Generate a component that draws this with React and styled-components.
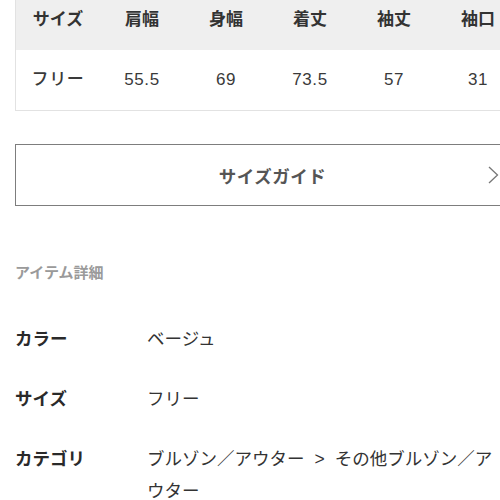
import React from "react";
import styled, { createGlobalStyle } from "styled-components";

const Global = createGlobalStyle`
  html, body { margin: 0; padding: 0; background: #fff; overflow: hidden; }
  body { font-family: "Liberation Sans", "Noto Sans CJK JP", sans-serif; color: #333; }
`;

const Page = styled.div`
  width: 530px;
  padding-left: 15px;
  box-sizing: border-box;
`;

const Table = styled.div`
  display: grid;
  grid-template-columns: repeat(7, 84px);
  border-left: 1px solid #e2e2e2;
  border-bottom: 1px solid #e2e2e2;
`;

const Cell = styled.div`
  display: flex;
  justify-content: center;
  align-items: ${(p) => (p.$head ? "flex-start" : "center")};
  box-sizing: border-box;
  height: ${(p) => (p.$head ? "50px" : "60px")};
  padding-top: ${(p) => (p.$head ? "8px" : "0")};
  background: ${(p) => (p.$head ? "#efefef" : "#fff")};
  font-size: 17px;
  line-height: 24px;
  font-weight: ${(p) => (p.$head ? 700 : 500)};
  letter-spacing: ${(p) => (p.$head ? "0" : "0.6px")};
  color: ${(p) => (p.$head ? "#333" : "#3a3a3a")};
  white-space: nowrap;
`;

const GuideButton = styled.div`
  margin-top: 33px;
  height: 62px;
  box-sizing: border-box;
  border: 1px solid #7d7d7d;
  display: flex;
  align-items: center;
  justify-content: center;
  position: relative;
  font-size: 17.5px;
  font-weight: 700;
  color: #555;
  letter-spacing: 0.5px;
`;

const Chevron = styled.svg`
  position: absolute;
  right: 30px;
  top: 50%;
  transform: translateY(-50%);
`;

const SectionTitle = styled.div`
  margin-top: 56px;
  font-size: 15px;
  line-height: 22px;
  font-weight: 700;
  color: #9a9a9a;
`;

const DetailList = styled.div`
  margin-top: 39px;
  display: flex;
  flex-direction: column;
  gap: 28px;
`;

const DetailRow = styled.div`
  display: grid;
  grid-template-columns: 132px 350px;
  font-size: 17.5px;
  line-height: 32px;
`;

const Label = styled.div`
  font-weight: 700;
  color: #2a2a2a;
`;

const Value = styled.div`
  color: #333;
`;

const Separator = styled.span`
  margin: 0 10px;
`;

const heads = ["サイズ", "肩幅", "身幅", "着丈", "袖丈", "袖口", "裾幅"];
const vals = ["フリー", "55.5", "69", "73.5", "57", "31", "60"];

export default function App() {
  return (
    <>
      <Global />
      <Page>
        <Table>
          {heads.map((h) => (
            <Cell key={h} $head>
              {h}
            </Cell>
          ))}
          {vals.map((v, i) => (
            <Cell key={i}>{v}</Cell>
          ))}
        </Table>
        <GuideButton>
          サイズガイド
          <Chevron width="11" height="18" viewBox="0 0 11 18">
            <path d="M1 1 L9.5 9 L1 17" fill="none" stroke="#777" strokeWidth="1.3" />
          </Chevron>
        </GuideButton>
        <SectionTitle>アイテム詳細</SectionTitle>
        <DetailList>
          <DetailRow>
            <Label>カラー</Label>
            <Value>ベージュ</Value>
          </DetailRow>
          <DetailRow>
            <Label>サイズ</Label>
            <Value>フリー</Value>
          </DetailRow>
          <DetailRow>
            <Label>カテゴリ</Label>
            <Value>
              ブルゾン／アウター<Separator>&gt;</Separator>その他ブルゾン／アウター
            </Value>
          </DetailRow>
        </DetailList>
      </Page>
    </>
  );
}
